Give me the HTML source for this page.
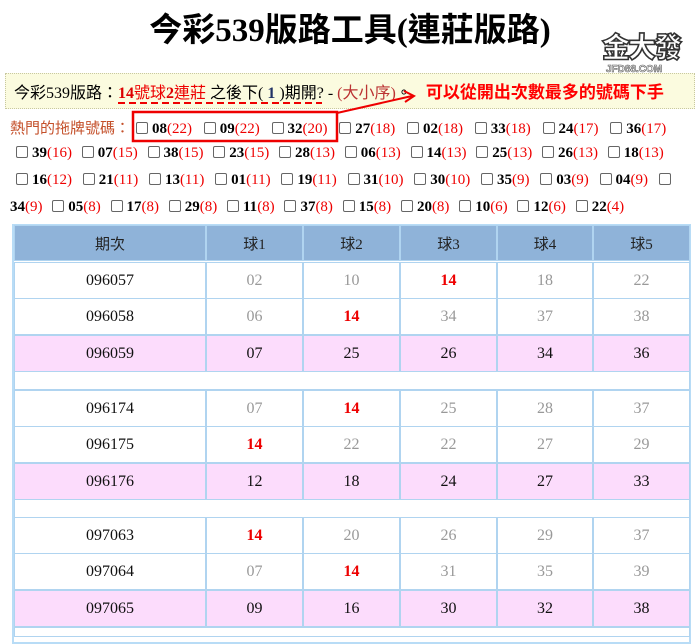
<!DOCTYPE html>
<html><head><meta charset="utf-8"><style>
*{margin:0;padding:0;box-sizing:border-box}
body{width:700px;height:632px;background:#fff;position:relative;overflow:hidden;font-family:"Liberation Serif","Noto Serif CJK SC","Noto Sans CJK TC",serif;color:#000}
.abs{position:absolute;white-space:nowrap}
.title{left:0;width:700px;text-align:center;top:3px;font-size:33px;font-weight:bold;font-family:"Liberation Serif","Noto Sans CJK TC",serif}
.logo{left:602px;top:26px;font-size:28px;font-weight:900;color:#fff;-webkit-text-stroke:1.6px #333;font-family:"Noto Sans CJK TC",sans-serif;letter-spacing:-2px}
.logo2{left:606px;top:64px;font-size:10px;color:#fff;-webkit-text-stroke:.6px #555;font-family:"Liberation Sans",sans-serif;font-weight:bold}
.ybox{left:5px;top:73px;width:690px;height:36px;background:#fbfbdf;border:1px dotted #c8c8a0}
.ytext{left:14px;top:78px;font-size:16px;font-family:"Liberation Serif","Noto Sans CJK TC",serif}
.red{color:#e00}
.dark{color:#d00;font-weight:bold}
.hot{font-size:15px}
.hot .cb{display:inline-block;width:12px;height:12px;border:1px solid #666;border-radius:2px;vertical-align:-1px;margin:0 4px 0 6px;background:#fff}
.hot b{font-weight:bold}
.hot i{font-style:normal;color:#e00}
.tbl{left:12px;top:224px;width:679px;height:420px;border:2px solid #b8dcf6;background:#fff}
.c{position:absolute;text-align:center;font-size:16px;border:1px solid #b0d4f0;display:flex;align-items:center;justify-content:center;font-family:"Liberation Serif","Noto Sans CJK TC",serif}
.h{background:#8fb3d9;color:#222;font-size:15px}
.g{color:#999;background:#fff}
.k{color:#111;background:#fff}
.p{background:#fcdcfc;color:#111}
.r{color:#e00;font-weight:bold}
</style></head><body>
<div class="abs title">今彩539版路工具(連莊版路)</div>
<div class="abs logo">金大發</div>
<div class="abs logo2">JFD88.COM</div>
<div class="abs ybox"></div>
<div class="abs ytext">今彩539版路：<span class="dark">14</span><span class="red">號球</span><span class="dark">2</span><span class="red">連莊</span> 之後下( <b style="color:#236">1</b> )期開? - <span style="color:#b33">(大小序)</span>。<span style="color:#f00;font-weight:bold;font-size:17px;font-family:'Noto Sans CJK TC',sans-serif;margin-left:14px">可以從開出次數最多的號碼下手</span></div>
<svg class="abs" style="left:0;top:0" width="700" height="632">
<path d="M118 103 H322" stroke="#e00" stroke-width="2" stroke-dasharray="7,4" fill="none"/>
<rect x="133" y="112" width="204" height="29" fill="none" stroke="#e00" stroke-width="2.5"/>
<path d="M337 113 L412 96" stroke="#e00" stroke-width="2"/>
<path d="M404 91 L414 96 L405 102" stroke="#e00" stroke-width="2" fill="none"/>
</svg>
<div class="abs hot" style="left:10px;top:117px;word-spacing:2px"><span style="color:#c4502a;font-family:'Noto Sans CJK TC',sans-serif;font-size:15px">熱門的拖牌號碼：</span><span class="cb"></span><b>08</b><i>(22)</i> <span class="cb"></span><b>09</b><i>(22)</i> <span class="cb"></span><b>32</b><i>(20)</i> <span class="cb"></span><b>27</b><i>(18)</i> <span class="cb"></span><b>02</b><i>(18)</i> <span class="cb"></span><b>33</b><i>(18)</i> <span class="cb"></span><b>24</b><i>(17)</i> <span class="cb"></span><b>36</b><i>(17)</i></div>
<div class="abs hot" style="left:10px;top:145px"><span class="cb"></span><b>39</b><i>(16)</i> <span class="cb"></span><b>07</b><i>(15)</i> <span class="cb"></span><b>38</b><i>(15)</i> <span class="cb"></span><b>23</b><i>(15)</i> <span class="cb"></span><b>28</b><i>(13)</i> <span class="cb"></span><b>06</b><i>(13)</i> <span class="cb"></span><b>14</b><i>(13)</i> <span class="cb"></span><b>25</b><i>(13)</i> <span class="cb"></span><b>26</b><i>(13)</i> <span class="cb"></span><b>18</b><i>(13)</i></div>
<div class="abs hot" style="left:10px;top:172px;word-spacing:1px"><span class="cb"></span><b>16</b><i>(12)</i> <span class="cb"></span><b>21</b><i>(11)</i> <span class="cb"></span><b>13</b><i>(11)</i> <span class="cb"></span><b>01</b><i>(11)</i> <span class="cb"></span><b>19</b><i>(11)</i> <span class="cb"></span><b>31</b><i>(10)</i> <span class="cb"></span><b>30</b><i>(10)</i> <span class="cb"></span><b>35</b><i>(9)</i> <span class="cb"></span><b>03</b><i>(9)</i> <span class="cb"></span><b>04</b><i>(9)</i> <span class="cb"></span></div>
<div class="abs hot" style="left:10px;top:199px"><b>34</b><i>(9)</i> <span class="cb"></span><b>05</b><i>(8)</i> <span class="cb"></span><b>17</b><i>(8)</i> <span class="cb"></span><b>29</b><i>(8)</i> <span class="cb"></span><b>11</b><i>(8)</i> <span class="cb"></span><b>37</b><i>(8)</i> <span class="cb"></span><b>15</b><i>(8)</i> <span class="cb"></span><b>20</b><i>(8)</i> <span class="cb"></span><b>10</b><i>(6)</i> <span class="cb"></span><b>12</b><i>(6)</i> <span class="cb"></span><b>22</b><i>(4)</i></div>
<div class="abs tbl"></div>
<div id="t"></div>
<script>
var xs=[14,206,303,400,497,593,690];
var out='';
function cell(i,y,h,cls,txt){out+='<div class="c '+cls+'" style="left:'+xs[i]+'px;top:'+y+'px;width:'+(xs[i+1]-xs[i])+'px;height:'+h+'px">'+txt+'</div>';}
var hd=['期次','球1','球2','球3','球4','球5'];
for(var i=0;i<6;i++)cell(i,225,36,'h',hd[i]);
var rows=[[262,'g',['096057','02','10','*14','18','22']],[298,'g',['096058','06','*14','34','37','38']],[335,'p',['096059','07','25','26','34','36']],
[390,'g',['096174','07','*14','25','28','37']],[426,'g',['096175','*14','22','22','27','29']],[463,'p',['096176','12','18','24','27','33']],
[517,'g',['097063','*14','20','26','29','37']],[553,'g',['097064','07','*14','31','35','39']],[590,'p',['097065','09','16','30','32','38']]];
rows.forEach(function(r){r[2].forEach(function(t,i){var cls=r[1];var s=t;if(t.charAt(0)=='*'){s='<span class="r">'+t.slice(1)+'</span>';}
if(i==0&&cls=='g'){cls='k';}cell(i,r[0],37,cls,s);});});
[371,499].forEach(function(y){out+='<div class="c" style="left:14px;top:'+y+'px;width:676px;height:19px;background:#fff"></div>';});
out+='<div class="c" style="left:14px;top:627px;width:676px;height:10px;background:#fff"></div>';
document.getElementById('t').innerHTML=out;
</script>
</body></html>
